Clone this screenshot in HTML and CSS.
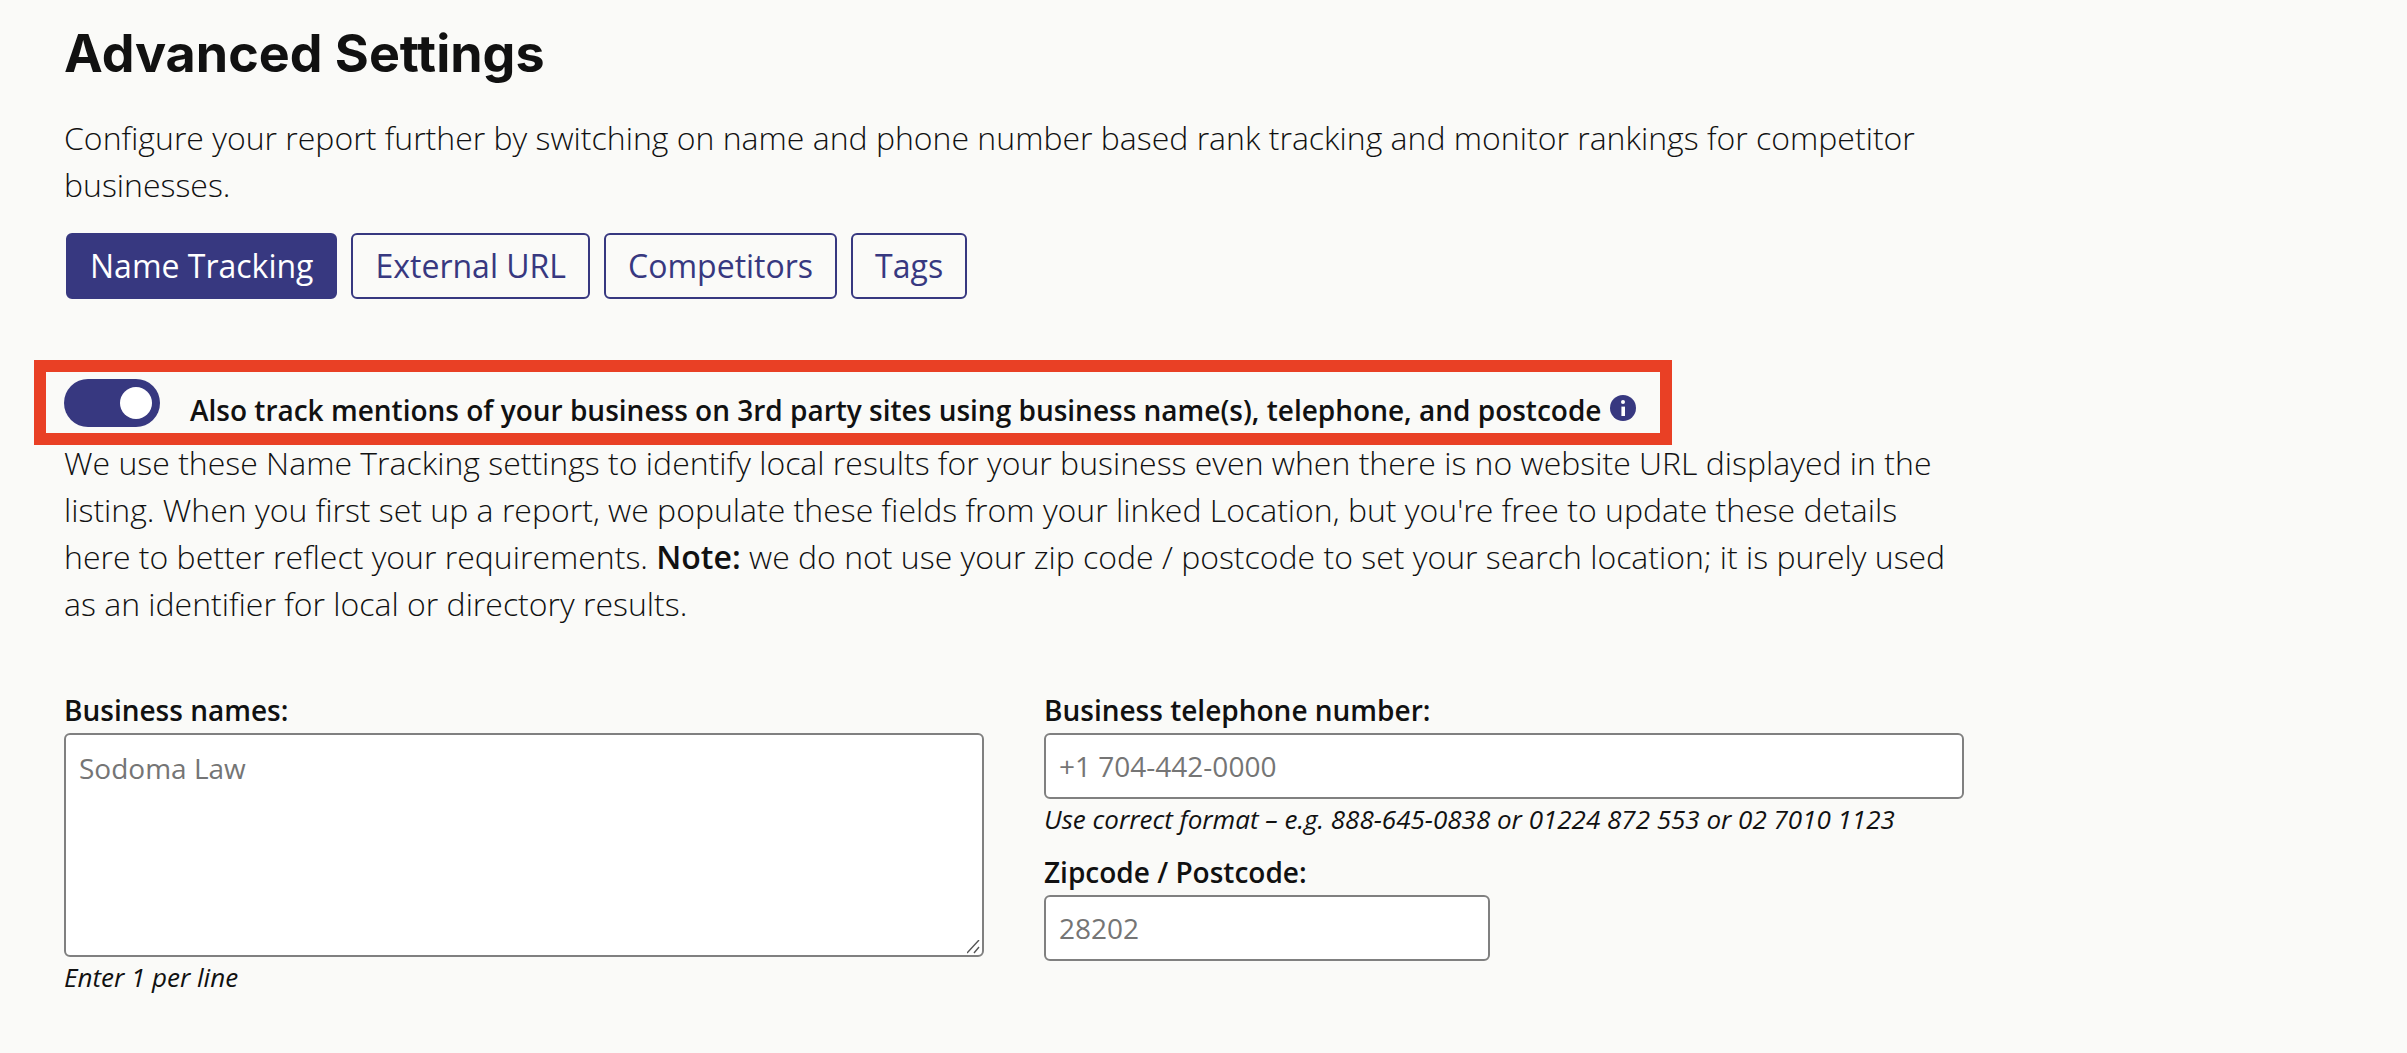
FILE: index.html
```html
<!DOCTYPE html>
<html lang="en">
<head>
<meta charset="utf-8">
<meta name="viewport" content="width=device-width, initial-scale=1">
<title>Advanced Settings</title>
<link rel="stylesheet" href="styles.css">
</head>
<body>
<main class="settings">
  <h1 class="title">Advanced Settings</h1>
  <p class="text">Configure your report further by switching on name and phone number based rank tracking and monitor rankings for competitor businesses.</p>
  <nav class="tabs">
    <button type="button" class="tab tab-active">Name Tracking</button>
    <button type="button" class="tab">External URL</button>
    <button type="button" class="tab">Competitors</button>
    <button type="button" class="tab">Tags</button>
  </nav>
  <div class="track">
    <input type="checkbox" class="switch" id="track" checked>
    <label class="label" for="track">Also track mentions of your business on 3rd party sites using business name(s), telephone, and postcode</label>
    <svg class="info" viewBox="0 0 26 26" aria-hidden="true">
      <circle cx="13" cy="13" r="13" fill="#373880"/>
      <circle cx="13" cy="7" r="2" fill="#fff"/>
      <path d="M11.4 11.6h3.6v9.4h-3.6z" fill="#fff"/>
    </svg>
  </div>
  <p class="text">We use these Name Tracking settings to identify local results for your business even when there is no website URL displayed in the listing. When you first set up a report, we populate these fields from your linked Location, but you're free to update these details here to better reflect your requirements. <strong>Note:</strong> we do not use your zip code / postcode to set your search location; it is purely used as an identifier for local or directory results.</p>
  <form class="fields">
    <div class="field">
      <label class="label" for="names">Business names:</label>
      <textarea class="control control-area" id="names" placeholder="Sodoma Law"></textarea>
      <p class="hint">Enter 1 per line</p>
    </div>
    <div class="column">
      <div class="field">
        <label class="label" for="phone">Business telephone number:</label>
        <input type="tel" class="control" id="phone" placeholder="+1 704-442-0000">
        <p class="hint">Use correct format – e.g. 888-645-0838 or 01224 872 553 or 02 7010 1123</p>
      </div>
      <div class="field field-half">
        <label class="label" for="zip">Zipcode / Postcode:</label>
        <input type="text" class="control" id="zip" placeholder="28202">
      </div>
    </div>
  </form>
</main>
</body>
</html>
```
FILE: styles.css
```css
* {
  box-sizing: border-box;
}

body {
  margin: 0;
  background: #fafaf8;
  color: #111;
  font-family: "Open Sans", sans-serif;
}

.settings {
  max-width: 2028px;
  padding: 24px 64px;
}

.title {
  margin: 0 0 30px;
  font: 700 52px/60px Inter, sans-serif;
}

.text {
  margin: 0;
  font-size: 32px;
  font-weight: 300;
  line-height: 47px;
}

.text strong {
  font-weight: 600;
}

.tabs {
  display: flex;
  flex-wrap: wrap;
  gap: 14px;
  margin: 25px 0 61px 2px;
}

.tab {
  height: 66px;
  padding: 0 22px;
  border: 2px solid #373880;
  border-radius: 6px;
  background: transparent;
  color: #373880;
  font: 400 32px/44px "Open Sans", sans-serif;
}

.tab-active {
  background: #373880;
  color: #fff;
}

.track {
  display: flex;
  align-items: flex-end;
  width: fit-content;
  margin: 0 0 -6px -30px;
  padding: 7px 24px 4px 18px;
  border: 12px solid #e94025;
}

.switch {
  flex: none;
  align-self: flex-start;
  appearance: none;
  display: flex;
  align-items: center;
  width: 96px;
  height: 48px;
  margin: 0 30px 2px 0;
  padding: 8px;
  border-radius: 24px;
  background: #999;
}

.switch::before {
  content: "";
  width: 32px;
  height: 32px;
  border-radius: 50%;
  background: #fff;
}

.switch:checked {
  justify-content: flex-end;
  background: #373880;
}

.label {
  font-size: 28px;
  font-weight: 600;
  line-height: 38px;
}

.info {
  flex: none;
  width: 26px;
  height: 26px;
  margin: 0 0 8px 9px;
}

.fields {
  display: grid;
  grid-template-columns: 1fr 1fr;
  gap: 60px;
  margin-top: 64px;
}

.column {
  display: flex;
  flex-direction: column;
  gap: 16px;
}

.field {
  display: flex;
  flex-direction: column;
}

.field-half {
  width: calc(50% - 14px);
}

.control {
  width: 100%;
  height: 66px;
  margin: 4px 0 2px;
  padding: 12px 13px;
  border: 2px solid #808080;
  border-radius: 6px;
  background: #fff;
  color: #111;
  font: 400 28px/42px "Open Sans", sans-serif;
}

.control-area {
  height: 224px;
  resize: vertical;
}

.control-area::-webkit-resizer {
  background: url("data:image/svg+xml,%3Csvg xmlns='http://www.w3.org/2000/svg' width='15' height='15'%3E%3Cpath d='M0 13L12 0M7 13l5-6' stroke='%23555' stroke-width='1.4'/%3E%3C/svg%3E") no-repeat;
}

.control::placeholder {
  color: #757575;
  opacity: 1;
}

.hint {
  margin: 0;
  font-size: 26px;
  font-style: italic;
  line-height: 36px;
}
```
